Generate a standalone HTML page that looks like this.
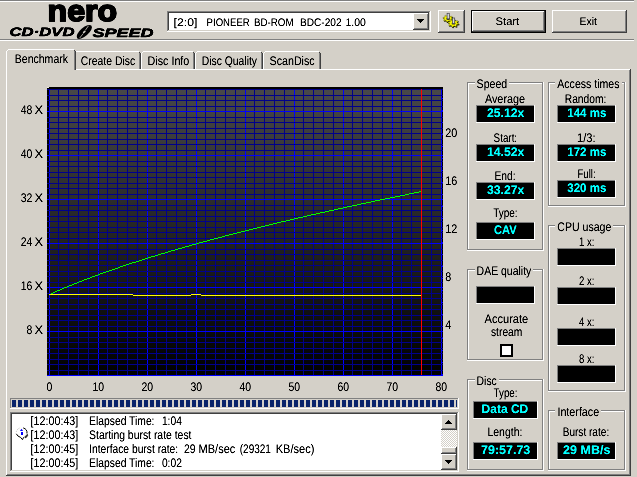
<!DOCTYPE html>
<html><head><meta charset="utf-8"><title>Nero CD-DVD Speed</title>
<style>
html,body{margin:0;padding:0;background:#d4d0c8;overflow:hidden}
svg{display:block;font-family:"Liberation Sans",sans-serif}
svg rect,svg polygon{shape-rendering:crispEdges}
svg text{text-rendering:geometricPrecision}
</style></head><body>
<svg width="637" height="477" viewBox="0 0 637 477">
<rect x="0" y="0" width="637" height="477" fill="#d4d0c8"/>
<rect x="0" y="0" width="634" height="1" fill="#808080"/>
<rect x="0" y="1" width="634" height="1" fill="#ffffff"/>
<rect x="0" y="39" width="634" height="1" fill="#808080"/>
<rect x="0" y="40" width="634" height="1" fill="#ffffff"/>
<g transform="translate(84.3,31.9) rotate(-41)"><ellipse cx="0" cy="0" rx="9.5" ry="4.1" fill="#000"/><path d="M-7.5,1.6 L-1.8,0.5 M2,-0.6 L7,-1.8" stroke="#a8a49c" stroke-width="0.9" fill="none"/><ellipse cx="0" cy="0" rx="1.7" ry="0.9" fill="#d4d0c8"/></g>
<rect x="167" y="11" width="264" height="21" fill="#ffffff"/>
<rect x="167" y="11" width="264" height="1" fill="#808080"/>
<rect x="167" y="11" width="1" height="21" fill="#808080"/>
<rect x="168" y="12" width="262" height="1" fill="#404040"/>
<rect x="168" y="12" width="1" height="19" fill="#404040"/>
<rect x="167" y="31" width="264" height="1" fill="#ffffff"/>
<rect x="430" y="11" width="1" height="21" fill="#ffffff"/>
<rect x="168" y="30" width="262" height="1" fill="#d4d0c8"/>
<rect x="429" y="12" width="1" height="19" fill="#d4d0c8"/>
<rect x="413" y="13" width="16" height="17" fill="#d4d0c8"/>
<rect x="413" y="13" width="16" height="1" fill="#ffffff"/>
<rect x="413" y="13" width="1" height="17" fill="#ffffff"/>
<rect x="414" y="28" width="15" height="1" fill="#808080"/>
<rect x="427" y="14" width="1" height="16" fill="#808080"/>
<rect x="413" y="29" width="16" height="1" fill="#404040"/>
<rect x="428" y="13" width="1" height="17" fill="#404040"/>
<polygon points="417,19 424,19 420.5,23" fill="#000"/>
<rect x="438" y="10" width="27" height="23" fill="#d4d0c8"/>
<rect x="438" y="10" width="27" height="1" fill="#ffffff"/>
<rect x="438" y="10" width="1" height="23" fill="#ffffff"/>
<rect x="439" y="31" width="26" height="1" fill="#808080"/>
<rect x="463" y="11" width="1" height="22" fill="#808080"/>
<rect x="438" y="32" width="27" height="1" fill="#404040"/>
<rect x="464" y="10" width="1" height="23" fill="#404040"/>
<polygon points="453.77,19.67 453.57,20.40 451.87,20.59 451.45,21.04 451.86,22.24 451.00,22.65 449.61,21.92 448.87,22.02 447.98,23.08 446.96,22.94 446.70,21.71 446.08,21.41 444.40,21.71 443.83,21.09 444.85,20.09 444.70,19.57 443.23,18.93 443.43,18.20 445.13,18.01 445.55,17.56 445.14,16.36 446.00,15.95 447.39,16.68 448.13,16.58 449.02,15.52 450.04,15.66 450.30,16.89 450.92,17.19 452.60,16.89 453.17,17.51 452.15,18.51 452.30,19.03" fill="#181800" style="shape-rendering:auto"/>
<polygon points="452.88,18.84 452.68,19.52 451.07,19.69 450.68,20.10 451.07,21.21 450.26,21.59 448.95,20.91 448.25,21.01 447.41,21.98 446.45,21.85 446.20,20.72 445.62,20.45 444.03,20.72 443.49,20.15 444.46,19.23 444.32,18.75 442.92,18.16 443.12,17.48 444.73,17.31 445.12,16.90 444.73,15.79 445.54,15.41 446.85,16.09 447.55,15.99 448.39,15.02 449.35,15.15 449.60,16.28 450.18,16.55 451.77,16.28 452.31,16.85 451.34,17.77 451.48,18.25" fill="#f6f600" stroke="#404000" stroke-width="0.4" style="shape-rendering:auto"/>
<ellipse cx="448.2" cy="18.7" rx="1.8" ry="1.2" fill="#303020"/>
<rect x="447.09999999999997" y="13.3" width="2.2" height="5.6" fill="#d8d8e0" stroke="#404048" stroke-width="0.7" style="shape-rendering:auto"/>
<polygon points="459.57,24.42 459.35,25.25 457.52,25.46 457.07,25.96 457.52,27.32 456.59,27.79 455.09,26.96 454.30,27.08 453.34,28.28 452.25,28.11 451.97,26.73 451.30,26.39 449.49,26.73 448.87,26.03 449.97,24.90 449.82,24.30 448.23,23.58 448.45,22.75 450.28,22.54 450.73,22.04 450.28,20.68 451.21,20.21 452.71,21.04 453.50,20.92 454.46,19.72 455.55,19.89 455.83,21.27 456.50,21.61 458.31,21.27 458.93,21.97 457.83,23.10 457.98,23.70" fill="#181800" style="shape-rendering:auto"/>
<polygon points="458.67,23.59 458.47,24.36 456.73,24.56 456.31,25.03 456.73,26.29 455.85,26.73 454.43,25.96 453.68,26.07 452.77,27.18 451.73,27.03 451.47,25.74 450.83,25.43 449.13,25.74 448.54,25.09 449.58,24.04 449.43,23.48 447.93,22.81 448.13,22.04 449.87,21.84 450.29,21.37 449.87,20.11 450.75,19.67 452.17,20.44 452.92,20.33 453.83,19.22 454.87,19.37 455.13,20.66 455.77,20.97 457.47,20.66 458.06,21.31 457.02,22.36 457.17,22.92" fill="#f6f600" stroke="#404000" stroke-width="0.4" style="shape-rendering:auto"/>
<ellipse cx="453.6" cy="23.4" rx="1.8" ry="1.2" fill="#303020"/>
<rect x="452.5" y="18.0" width="2.2" height="5.6" fill="#d8d8e0" stroke="#404048" stroke-width="0.7" style="shape-rendering:auto"/>
<rect x="471" y="10" width="75" height="23" fill="#000"/>
<rect x="472" y="11" width="73" height="21" fill="#d4d0c8"/>
<rect x="472" y="11" width="73" height="1" fill="#ffffff"/>
<rect x="472" y="11" width="1" height="21" fill="#ffffff"/>
<rect x="473" y="30" width="72" height="1" fill="#808080"/>
<rect x="543" y="12" width="1" height="20" fill="#808080"/>
<rect x="472" y="31" width="73" height="1" fill="#404040"/>
<rect x="544" y="11" width="1" height="21" fill="#404040"/>
<rect x="552" y="10" width="75" height="23" fill="#d4d0c8"/>
<rect x="552" y="10" width="75" height="1" fill="#ffffff"/>
<rect x="552" y="10" width="1" height="23" fill="#ffffff"/>
<rect x="553" y="31" width="74" height="1" fill="#808080"/>
<rect x="625" y="11" width="1" height="22" fill="#808080"/>
<rect x="552" y="32" width="75" height="1" fill="#404040"/>
<rect x="626" y="10" width="1" height="23" fill="#404040"/>
<rect x="6" y="69" width="624" height="1" fill="#ffffff"/>
<rect x="6" y="69" width="1" height="406" fill="#ffffff"/>
<rect x="7" y="474" width="623" height="1" fill="#808080"/>
<rect x="629" y="70" width="1" height="405" fill="#808080"/>
<rect x="6" y="475" width="625" height="1" fill="#404040"/>
<rect x="630" y="69" width="1" height="407" fill="#404040"/>
<rect x="74" y="53" width="1" height="16" fill="#ffffff"/>
<rect x="76" y="51" width="63" height="1" fill="#ffffff"/>
<rect x="75" y="52" width="1" height="1" fill="#ffffff"/>
<rect x="139" y="53" width="1" height="16" fill="#808080"/>
<rect x="140" y="53" width="1" height="16" fill="#404040"/>
<rect x="139" y="52" width="1" height="1" fill="#404040"/>
<rect x="141" y="53" width="1" height="16" fill="#ffffff"/>
<rect x="143" y="51" width="50" height="1" fill="#ffffff"/>
<rect x="142" y="52" width="1" height="1" fill="#ffffff"/>
<rect x="193" y="53" width="1" height="16" fill="#808080"/>
<rect x="194" y="53" width="1" height="16" fill="#404040"/>
<rect x="193" y="52" width="1" height="1" fill="#404040"/>
<rect x="195" y="53" width="1" height="16" fill="#ffffff"/>
<rect x="197" y="51" width="64" height="1" fill="#ffffff"/>
<rect x="196" y="52" width="1" height="1" fill="#ffffff"/>
<rect x="261" y="53" width="1" height="16" fill="#808080"/>
<rect x="262" y="53" width="1" height="16" fill="#404040"/>
<rect x="261" y="52" width="1" height="1" fill="#404040"/>
<rect x="263" y="53" width="1" height="16" fill="#ffffff"/>
<rect x="265" y="51" width="54" height="1" fill="#ffffff"/>
<rect x="264" y="52" width="1" height="1" fill="#ffffff"/>
<rect x="319" y="53" width="1" height="16" fill="#808080"/>
<rect x="320" y="53" width="1" height="16" fill="#404040"/>
<rect x="319" y="52" width="1" height="1" fill="#404040"/>
<rect x="6" y="49" width="70" height="21" fill="#d4d0c8"/>
<rect x="6" y="51" width="1" height="19" fill="#ffffff"/>
<rect x="8" y="49" width="66" height="1" fill="#ffffff"/>
<rect x="7" y="50" width="1" height="1" fill="#ffffff"/>
<rect x="74" y="51" width="1" height="19" fill="#808080"/>
<rect x="75" y="51" width="1" height="19" fill="#404040"/>
<rect x="74" y="50" width="1" height="1" fill="#404040"/>
<defs><linearGradient id="gg" x1="0" y1="0" x2="0" y2="1"><stop offset="0" stop-color="#484848"/><stop offset="1" stop-color="#000000"/></linearGradient></defs>
<rect x="47" y="87" width="396" height="289" fill="#000"/>
<rect x="47" y="87" width="2" height="1" fill="#e8e6e0"/>
<rect x="49" y="89" width="393" height="287" fill="url(#gg)"/>
<rect x="49" y="89" width="1" height="287" fill="#0000ff"/>
<rect x="58" y="89" width="1" height="287" fill="#00008c"/>
<rect x="68" y="89" width="1" height="287" fill="#00008c"/>
<rect x="78" y="89" width="1" height="287" fill="#00008c"/>
<rect x="88" y="89" width="1" height="287" fill="#00008c"/>
<rect x="98" y="89" width="1" height="287" fill="#0000ff"/>
<rect x="107" y="89" width="1" height="287" fill="#00008c"/>
<rect x="117" y="89" width="1" height="287" fill="#00008c"/>
<rect x="127" y="89" width="1" height="287" fill="#00008c"/>
<rect x="137" y="89" width="1" height="287" fill="#00008c"/>
<rect x="147" y="89" width="1" height="287" fill="#0000ff"/>
<rect x="156" y="89" width="1" height="287" fill="#00008c"/>
<rect x="166" y="89" width="1" height="287" fill="#00008c"/>
<rect x="176" y="89" width="1" height="287" fill="#00008c"/>
<rect x="186" y="89" width="1" height="287" fill="#00008c"/>
<rect x="196" y="89" width="1" height="287" fill="#0000ff"/>
<rect x="205" y="89" width="1" height="287" fill="#00008c"/>
<rect x="215" y="89" width="1" height="287" fill="#00008c"/>
<rect x="225" y="89" width="1" height="287" fill="#00008c"/>
<rect x="235" y="89" width="1" height="287" fill="#00008c"/>
<rect x="245" y="89" width="1" height="287" fill="#0000ff"/>
<rect x="254" y="89" width="1" height="287" fill="#00008c"/>
<rect x="264" y="89" width="1" height="287" fill="#00008c"/>
<rect x="274" y="89" width="1" height="287" fill="#00008c"/>
<rect x="284" y="89" width="1" height="287" fill="#00008c"/>
<rect x="294" y="89" width="1" height="287" fill="#0000ff"/>
<rect x="303" y="89" width="1" height="287" fill="#00008c"/>
<rect x="313" y="89" width="1" height="287" fill="#00008c"/>
<rect x="323" y="89" width="1" height="287" fill="#00008c"/>
<rect x="333" y="89" width="1" height="287" fill="#00008c"/>
<rect x="343" y="89" width="1" height="287" fill="#0000ff"/>
<rect x="352" y="89" width="1" height="287" fill="#00008c"/>
<rect x="362" y="89" width="1" height="287" fill="#00008c"/>
<rect x="372" y="89" width="1" height="287" fill="#00008c"/>
<rect x="382" y="89" width="1" height="287" fill="#00008c"/>
<rect x="392" y="89" width="1" height="287" fill="#0000ff"/>
<rect x="401" y="89" width="1" height="287" fill="#00008c"/>
<rect x="411" y="89" width="1" height="287" fill="#00008c"/>
<rect x="421" y="89" width="1" height="287" fill="#00008c"/>
<rect x="431" y="89" width="1" height="287" fill="#00008c"/>
<rect x="441" y="89" width="1" height="287" fill="#0000ff"/>
<rect x="47" y="89" width="396" height="1" fill="#00008c"/>
<rect x="47" y="95" width="396" height="1" fill="#00008c"/>
<rect x="47" y="100" width="396" height="1" fill="#00008c"/>
<rect x="47" y="106" width="396" height="1" fill="#00008c"/>
<rect x="47" y="111" width="396" height="1" fill="#0000ff"/>
<rect x="47" y="117" width="396" height="1" fill="#00008c"/>
<rect x="47" y="122" width="396" height="1" fill="#00008c"/>
<rect x="47" y="128" width="396" height="1" fill="#00008c"/>
<rect x="47" y="133" width="396" height="1" fill="#00008c"/>
<rect x="47" y="139" width="396" height="1" fill="#00008c"/>
<rect x="47" y="144" width="396" height="1" fill="#00008c"/>
<rect x="47" y="150" width="396" height="1" fill="#00008c"/>
<rect x="47" y="155" width="396" height="1" fill="#0000ff"/>
<rect x="47" y="161" width="396" height="1" fill="#00008c"/>
<rect x="47" y="166" width="396" height="1" fill="#00008c"/>
<rect x="47" y="172" width="396" height="1" fill="#00008c"/>
<rect x="47" y="177" width="396" height="1" fill="#00008c"/>
<rect x="47" y="183" width="396" height="1" fill="#00008c"/>
<rect x="47" y="188" width="396" height="1" fill="#00008c"/>
<rect x="47" y="194" width="396" height="1" fill="#00008c"/>
<rect x="47" y="199" width="396" height="1" fill="#0000ff"/>
<rect x="47" y="205" width="396" height="1" fill="#00008c"/>
<rect x="47" y="210" width="396" height="1" fill="#00008c"/>
<rect x="47" y="216" width="396" height="1" fill="#00008c"/>
<rect x="47" y="221" width="396" height="1" fill="#00008c"/>
<rect x="47" y="227" width="396" height="1" fill="#00008c"/>
<rect x="47" y="232" width="396" height="1" fill="#00008c"/>
<rect x="47" y="238" width="396" height="1" fill="#00008c"/>
<rect x="47" y="243" width="396" height="1" fill="#0000ff"/>
<rect x="47" y="249" width="396" height="1" fill="#00008c"/>
<rect x="47" y="254" width="396" height="1" fill="#00008c"/>
<rect x="47" y="260" width="396" height="1" fill="#00008c"/>
<rect x="47" y="265" width="396" height="1" fill="#00008c"/>
<rect x="47" y="271" width="396" height="1" fill="#00008c"/>
<rect x="47" y="276" width="396" height="1" fill="#00008c"/>
<rect x="47" y="282" width="396" height="1" fill="#00008c"/>
<rect x="47" y="287" width="396" height="1" fill="#0000ff"/>
<rect x="47" y="293" width="396" height="1" fill="#00008c"/>
<rect x="47" y="298" width="396" height="1" fill="#00008c"/>
<rect x="47" y="304" width="396" height="1" fill="#00008c"/>
<rect x="47" y="309" width="396" height="1" fill="#00008c"/>
<rect x="47" y="315" width="396" height="1" fill="#00008c"/>
<rect x="47" y="320" width="396" height="1" fill="#00008c"/>
<rect x="47" y="326" width="396" height="1" fill="#00008c"/>
<rect x="47" y="331" width="396" height="1" fill="#0000ff"/>
<rect x="47" y="337" width="396" height="1" fill="#00008c"/>
<rect x="47" y="342" width="396" height="1" fill="#00008c"/>
<rect x="47" y="348" width="396" height="1" fill="#00008c"/>
<rect x="47" y="353" width="396" height="1" fill="#00008c"/>
<rect x="47" y="359" width="396" height="1" fill="#00008c"/>
<rect x="47" y="364" width="396" height="1" fill="#00008c"/>
<rect x="47" y="370" width="396" height="1" fill="#00008c"/>
<rect x="47" y="375" width="396" height="1" fill="#0000ff"/>
<rect x="442" y="374" width="1" height="1" fill="#0000ff"/>
<rect x="442" y="362" width="1" height="1" fill="#0000ff"/>
<rect x="442" y="350" width="1" height="1" fill="#0000ff"/>
<rect x="442" y="338" width="1" height="1" fill="#0000ff"/>
<rect x="442" y="326" width="1" height="1" fill="#0000ff"/>
<rect x="442" y="314" width="1" height="1" fill="#0000ff"/>
<rect x="442" y="302" width="1" height="1" fill="#0000ff"/>
<rect x="442" y="290" width="1" height="1" fill="#0000ff"/>
<rect x="442" y="278" width="1" height="1" fill="#0000ff"/>
<rect x="442" y="266" width="1" height="1" fill="#0000ff"/>
<rect x="442" y="254" width="1" height="1" fill="#0000ff"/>
<rect x="442" y="242" width="1" height="1" fill="#0000ff"/>
<rect x="442" y="230" width="1" height="1" fill="#0000ff"/>
<rect x="442" y="218" width="1" height="1" fill="#0000ff"/>
<rect x="442" y="206" width="1" height="1" fill="#0000ff"/>
<rect x="442" y="194" width="1" height="1" fill="#0000ff"/>
<rect x="442" y="182" width="1" height="1" fill="#0000ff"/>
<rect x="442" y="170" width="1" height="1" fill="#0000ff"/>
<rect x="442" y="158" width="1" height="1" fill="#0000ff"/>
<rect x="442" y="146" width="1" height="1" fill="#0000ff"/>
<rect x="442" y="134" width="1" height="1" fill="#0000ff"/>
<rect x="442" y="122" width="1" height="1" fill="#0000ff"/>
<rect x="442" y="110" width="1" height="1" fill="#0000ff"/>
<rect x="442" y="98" width="1" height="1" fill="#0000ff"/>
<rect x="49" y="294" width="2" height="1" fill="#00ff00"/>
<rect x="51" y="293" width="2" height="1" fill="#00ff00"/>
<rect x="53" y="292" width="2" height="1" fill="#00ff00"/>
<rect x="55" y="291" width="2" height="1" fill="#00ff00"/>
<rect x="57" y="290" width="3" height="1" fill="#00ff00"/>
<rect x="60" y="289" width="2" height="1" fill="#00ff00"/>
<rect x="62" y="288" width="2" height="1" fill="#00ff00"/>
<rect x="64" y="287" width="3" height="1" fill="#00ff00"/>
<rect x="67" y="286" width="2" height="1" fill="#00ff00"/>
<rect x="69" y="285" width="3" height="1" fill="#00ff00"/>
<rect x="72" y="284" width="2" height="1" fill="#00ff00"/>
<rect x="74" y="283" width="3" height="1" fill="#00ff00"/>
<rect x="77" y="282" width="2" height="1" fill="#00ff00"/>
<rect x="79" y="281" width="3" height="1" fill="#00ff00"/>
<rect x="82" y="280" width="2" height="1" fill="#00ff00"/>
<rect x="84" y="279" width="3" height="1" fill="#00ff00"/>
<rect x="87" y="278" width="3" height="1" fill="#00ff00"/>
<rect x="90" y="277" width="2" height="1" fill="#00ff00"/>
<rect x="92" y="276" width="3" height="1" fill="#00ff00"/>
<rect x="95" y="275" width="3" height="1" fill="#00ff00"/>
<rect x="98" y="274" width="2" height="1" fill="#00ff00"/>
<rect x="100" y="273" width="3" height="1" fill="#00ff00"/>
<rect x="103" y="272" width="3" height="1" fill="#00ff00"/>
<rect x="106" y="271" width="3" height="1" fill="#00ff00"/>
<rect x="109" y="270" width="3" height="1" fill="#00ff00"/>
<rect x="112" y="269" width="3" height="1" fill="#00ff00"/>
<rect x="115" y="268" width="3" height="1" fill="#00ff00"/>
<rect x="118" y="267" width="2" height="1" fill="#00ff00"/>
<rect x="120" y="266" width="3" height="1" fill="#00ff00"/>
<rect x="123" y="265" width="3" height="1" fill="#00ff00"/>
<rect x="126" y="264" width="3" height="1" fill="#00ff00"/>
<rect x="129" y="263" width="3" height="1" fill="#00ff00"/>
<rect x="132" y="262" width="4" height="1" fill="#00ff00"/>
<rect x="136" y="261" width="3" height="1" fill="#00ff00"/>
<rect x="139" y="260" width="3" height="1" fill="#00ff00"/>
<rect x="142" y="259" width="3" height="1" fill="#00ff00"/>
<rect x="145" y="258" width="3" height="1" fill="#00ff00"/>
<rect x="148" y="257" width="3" height="1" fill="#00ff00"/>
<rect x="151" y="256" width="4" height="1" fill="#00ff00"/>
<rect x="155" y="255" width="3" height="1" fill="#00ff00"/>
<rect x="158" y="254" width="3" height="1" fill="#00ff00"/>
<rect x="161" y="253" width="4" height="1" fill="#00ff00"/>
<rect x="165" y="252" width="3" height="1" fill="#00ff00"/>
<rect x="168" y="251" width="3" height="1" fill="#00ff00"/>
<rect x="171" y="250" width="4" height="1" fill="#00ff00"/>
<rect x="175" y="249" width="3" height="1" fill="#00ff00"/>
<rect x="178" y="248" width="4" height="1" fill="#00ff00"/>
<rect x="182" y="247" width="3" height="1" fill="#00ff00"/>
<rect x="185" y="246" width="4" height="1" fill="#00ff00"/>
<rect x="189" y="245" width="3" height="1" fill="#00ff00"/>
<rect x="192" y="244" width="4" height="1" fill="#00ff00"/>
<rect x="196" y="243" width="3" height="1" fill="#00ff00"/>
<rect x="199" y="242" width="4" height="1" fill="#00ff00"/>
<rect x="203" y="241" width="4" height="1" fill="#00ff00"/>
<rect x="207" y="240" width="3" height="1" fill="#00ff00"/>
<rect x="210" y="239" width="4" height="1" fill="#00ff00"/>
<rect x="214" y="238" width="4" height="1" fill="#00ff00"/>
<rect x="218" y="237" width="4" height="1" fill="#00ff00"/>
<rect x="222" y="236" width="3" height="1" fill="#00ff00"/>
<rect x="225" y="235" width="4" height="1" fill="#00ff00"/>
<rect x="229" y="234" width="4" height="1" fill="#00ff00"/>
<rect x="233" y="233" width="4" height="1" fill="#00ff00"/>
<rect x="237" y="232" width="4" height="1" fill="#00ff00"/>
<rect x="241" y="231" width="4" height="1" fill="#00ff00"/>
<rect x="245" y="230" width="4" height="1" fill="#00ff00"/>
<rect x="249" y="229" width="4" height="1" fill="#00ff00"/>
<rect x="253" y="228" width="4" height="1" fill="#00ff00"/>
<rect x="257" y="227" width="4" height="1" fill="#00ff00"/>
<rect x="261" y="226" width="4" height="1" fill="#00ff00"/>
<rect x="265" y="225" width="4" height="1" fill="#00ff00"/>
<rect x="269" y="224" width="4" height="1" fill="#00ff00"/>
<rect x="273" y="223" width="4" height="1" fill="#00ff00"/>
<rect x="277" y="222" width="4" height="1" fill="#00ff00"/>
<rect x="281" y="221" width="5" height="1" fill="#00ff00"/>
<rect x="286" y="220" width="4" height="1" fill="#00ff00"/>
<rect x="290" y="219" width="4" height="1" fill="#00ff00"/>
<rect x="294" y="218" width="4" height="1" fill="#00ff00"/>
<rect x="298" y="217" width="5" height="1" fill="#00ff00"/>
<rect x="303" y="216" width="4" height="1" fill="#00ff00"/>
<rect x="307" y="215" width="4" height="1" fill="#00ff00"/>
<rect x="311" y="214" width="5" height="1" fill="#00ff00"/>
<rect x="316" y="213" width="4" height="1" fill="#00ff00"/>
<rect x="320" y="212" width="5" height="1" fill="#00ff00"/>
<rect x="325" y="211" width="4" height="1" fill="#00ff00"/>
<rect x="329" y="210" width="5" height="1" fill="#00ff00"/>
<rect x="334" y="209" width="4" height="1" fill="#00ff00"/>
<rect x="338" y="208" width="5" height="1" fill="#00ff00"/>
<rect x="343" y="207" width="4" height="1" fill="#00ff00"/>
<rect x="347" y="206" width="5" height="1" fill="#00ff00"/>
<rect x="352" y="205" width="5" height="1" fill="#00ff00"/>
<rect x="357" y="204" width="4" height="1" fill="#00ff00"/>
<rect x="361" y="203" width="5" height="1" fill="#00ff00"/>
<rect x="366" y="202" width="5" height="1" fill="#00ff00"/>
<rect x="371" y="201" width="4" height="1" fill="#00ff00"/>
<rect x="375" y="200" width="5" height="1" fill="#00ff00"/>
<rect x="380" y="199" width="5" height="1" fill="#00ff00"/>
<rect x="385" y="198" width="5" height="1" fill="#00ff00"/>
<rect x="390" y="197" width="5" height="1" fill="#00ff00"/>
<rect x="395" y="196" width="5" height="1" fill="#00ff00"/>
<rect x="400" y="195" width="5" height="1" fill="#00ff00"/>
<rect x="405" y="194" width="4" height="1" fill="#00ff00"/>
<rect x="409" y="193" width="5" height="1" fill="#00ff00"/>
<rect x="414" y="192" width="5" height="1" fill="#00ff00"/>
<rect x="419" y="191" width="3" height="1" fill="#00ff00"/>
<rect x="49" y="294" width="84" height="1" fill="#ffff00"/>
<rect x="133" y="295" width="58" height="1" fill="#ffff00"/>
<rect x="191" y="294" width="10" height="1" fill="#ffff00"/>
<rect x="201" y="295" width="220" height="1" fill="#ffff00"/>
<rect x="421" y="89" width="1" height="286" fill="#ff0000"/>
<rect x="10" y="398" width="448" height="1" fill="#808080"/>
<rect x="10" y="398" width="1" height="11" fill="#808080"/>
<rect x="10" y="408" width="449" height="1" fill="#ffffff"/>
<rect x="458" y="398" width="1" height="11" fill="#ffffff"/>
<rect x="12" y="400" width="4" height="7" fill="#0a246a"/>
<rect x="18" y="400" width="4" height="7" fill="#0a246a"/>
<rect x="24" y="400" width="4" height="7" fill="#0a246a"/>
<rect x="30" y="400" width="4" height="7" fill="#0a246a"/>
<rect x="36" y="400" width="4" height="7" fill="#0a246a"/>
<rect x="42" y="400" width="4" height="7" fill="#0a246a"/>
<rect x="48" y="400" width="4" height="7" fill="#0a246a"/>
<rect x="54" y="400" width="4" height="7" fill="#0a246a"/>
<rect x="60" y="400" width="4" height="7" fill="#0a246a"/>
<rect x="66" y="400" width="4" height="7" fill="#0a246a"/>
<rect x="72" y="400" width="4" height="7" fill="#0a246a"/>
<rect x="78" y="400" width="4" height="7" fill="#0a246a"/>
<rect x="84" y="400" width="4" height="7" fill="#0a246a"/>
<rect x="90" y="400" width="4" height="7" fill="#0a246a"/>
<rect x="96" y="400" width="4" height="7" fill="#0a246a"/>
<rect x="102" y="400" width="4" height="7" fill="#0a246a"/>
<rect x="108" y="400" width="4" height="7" fill="#0a246a"/>
<rect x="114" y="400" width="4" height="7" fill="#0a246a"/>
<rect x="120" y="400" width="4" height="7" fill="#0a246a"/>
<rect x="126" y="400" width="4" height="7" fill="#0a246a"/>
<rect x="132" y="400" width="4" height="7" fill="#0a246a"/>
<rect x="138" y="400" width="4" height="7" fill="#0a246a"/>
<rect x="144" y="400" width="4" height="7" fill="#0a246a"/>
<rect x="150" y="400" width="4" height="7" fill="#0a246a"/>
<rect x="156" y="400" width="4" height="7" fill="#0a246a"/>
<rect x="162" y="400" width="4" height="7" fill="#0a246a"/>
<rect x="168" y="400" width="4" height="7" fill="#0a246a"/>
<rect x="174" y="400" width="4" height="7" fill="#0a246a"/>
<rect x="180" y="400" width="4" height="7" fill="#0a246a"/>
<rect x="186" y="400" width="4" height="7" fill="#0a246a"/>
<rect x="192" y="400" width="4" height="7" fill="#0a246a"/>
<rect x="198" y="400" width="4" height="7" fill="#0a246a"/>
<rect x="204" y="400" width="4" height="7" fill="#0a246a"/>
<rect x="210" y="400" width="4" height="7" fill="#0a246a"/>
<rect x="216" y="400" width="4" height="7" fill="#0a246a"/>
<rect x="222" y="400" width="4" height="7" fill="#0a246a"/>
<rect x="228" y="400" width="4" height="7" fill="#0a246a"/>
<rect x="234" y="400" width="4" height="7" fill="#0a246a"/>
<rect x="240" y="400" width="4" height="7" fill="#0a246a"/>
<rect x="246" y="400" width="4" height="7" fill="#0a246a"/>
<rect x="252" y="400" width="4" height="7" fill="#0a246a"/>
<rect x="258" y="400" width="4" height="7" fill="#0a246a"/>
<rect x="264" y="400" width="4" height="7" fill="#0a246a"/>
<rect x="270" y="400" width="4" height="7" fill="#0a246a"/>
<rect x="276" y="400" width="4" height="7" fill="#0a246a"/>
<rect x="282" y="400" width="4" height="7" fill="#0a246a"/>
<rect x="288" y="400" width="4" height="7" fill="#0a246a"/>
<rect x="294" y="400" width="4" height="7" fill="#0a246a"/>
<rect x="300" y="400" width="4" height="7" fill="#0a246a"/>
<rect x="306" y="400" width="4" height="7" fill="#0a246a"/>
<rect x="312" y="400" width="4" height="7" fill="#0a246a"/>
<rect x="318" y="400" width="4" height="7" fill="#0a246a"/>
<rect x="324" y="400" width="4" height="7" fill="#0a246a"/>
<rect x="330" y="400" width="4" height="7" fill="#0a246a"/>
<rect x="336" y="400" width="4" height="7" fill="#0a246a"/>
<rect x="342" y="400" width="4" height="7" fill="#0a246a"/>
<rect x="348" y="400" width="4" height="7" fill="#0a246a"/>
<rect x="354" y="400" width="4" height="7" fill="#0a246a"/>
<rect x="360" y="400" width="4" height="7" fill="#0a246a"/>
<rect x="366" y="400" width="4" height="7" fill="#0a246a"/>
<rect x="372" y="400" width="4" height="7" fill="#0a246a"/>
<rect x="378" y="400" width="4" height="7" fill="#0a246a"/>
<rect x="384" y="400" width="4" height="7" fill="#0a246a"/>
<rect x="390" y="400" width="4" height="7" fill="#0a246a"/>
<rect x="396" y="400" width="4" height="7" fill="#0a246a"/>
<rect x="402" y="400" width="4" height="7" fill="#0a246a"/>
<rect x="408" y="400" width="4" height="7" fill="#0a246a"/>
<rect x="414" y="400" width="4" height="7" fill="#0a246a"/>
<rect x="420" y="400" width="4" height="7" fill="#0a246a"/>
<rect x="426" y="400" width="4" height="7" fill="#0a246a"/>
<rect x="432" y="400" width="4" height="7" fill="#0a246a"/>
<rect x="438" y="400" width="4" height="7" fill="#0a246a"/>
<rect x="444" y="400" width="4" height="7" fill="#0a246a"/>
<rect x="450" y="400" width="4" height="7" fill="#0a246a"/>
<rect x="456" y="400" width="1" height="7" fill="#0a246a"/>
<rect x="10" y="412" width="449" height="60" fill="#ffffff"/>
<rect x="10" y="412" width="448" height="1" fill="#808080"/>
<rect x="10" y="412" width="1" height="59" fill="#808080"/>
<rect x="11" y="413" width="446" height="1" fill="#404040"/>
<rect x="11" y="413" width="1" height="57" fill="#404040"/>
<rect x="10" y="471" width="449" height="1" fill="#ffffff"/>
<rect x="458" y="412" width="1" height="60" fill="#ffffff"/>
<rect x="11" y="470" width="447" height="1" fill="#d4d0c8"/>
<rect x="457" y="413" width="1" height="58" fill="#d4d0c8"/>
<rect x="441" y="414" width="16" height="56" fill="#eae8e3"/>
<defs><pattern id="chk" width="2" height="2" patternUnits="userSpaceOnUse"><rect width="2" height="2" fill="#fff"/><rect width="1" height="1" fill="#d4d0c8"/><rect x="1" y="1" width="1" height="1" fill="#d4d0c8"/></pattern></defs>
<rect x="441" y="414" width="16" height="56" fill="url(#chk)"/>
<rect x="441" y="414" width="16" height="16" fill="#d4d0c8"/>
<rect x="441" y="414" width="16" height="1" fill="#ffffff"/>
<rect x="441" y="414" width="1" height="16" fill="#ffffff"/>
<rect x="442" y="428" width="15" height="1" fill="#808080"/>
<rect x="455" y="415" width="1" height="15" fill="#808080"/>
<rect x="441" y="429" width="16" height="1" fill="#404040"/>
<rect x="456" y="414" width="1" height="16" fill="#404040"/>
<rect x="441" y="454" width="16" height="16" fill="#d4d0c8"/>
<rect x="441" y="454" width="16" height="1" fill="#ffffff"/>
<rect x="441" y="454" width="1" height="16" fill="#ffffff"/>
<rect x="442" y="468" width="15" height="1" fill="#808080"/>
<rect x="455" y="455" width="1" height="15" fill="#808080"/>
<rect x="441" y="469" width="16" height="1" fill="#404040"/>
<rect x="456" y="454" width="1" height="16" fill="#404040"/>
<rect x="441" y="447" width="16" height="7" fill="#d4d0c8"/>
<rect x="441" y="447" width="16" height="1" fill="#ffffff"/>
<rect x="441" y="447" width="1" height="7" fill="#ffffff"/>
<rect x="442" y="452" width="15" height="1" fill="#808080"/>
<rect x="455" y="448" width="1" height="6" fill="#808080"/>
<rect x="441" y="453" width="16" height="1" fill="#404040"/>
<rect x="456" y="447" width="1" height="7" fill="#404040"/>
<polygon points="445,424 452,424 448.5,420" fill="#000"/>
<polygon points="445,460 452,460 448.5,464" fill="#000"/>
<g style="shape-rendering:auto"><circle cx="21.7" cy="432.9" r="5.3" fill="#fff"/><path d="M23.2,427.9 A5.3,5.3 0 0 1 27,433.5" fill="none" stroke="#000" stroke-width="1"/><path d="M16.3,433.8 Q17.5,436.5 20.6,437.4 L22.5,439.7 L23.6,437.3" fill="#fff" stroke="#000" stroke-width="1" stroke-linejoin="round"/><path d="M24.6,437.2 L27.4,434.2 L27.6,435.8 L25.8,437.9 Z" fill="#303030" stroke="#000" stroke-width="0.6"/><path d="M16.4,431.6 A5.3,5.3 0 0 1 20.3,427.8" fill="none" stroke="#909090" stroke-width="0.8" stroke-dasharray="0.8 1.1"/><path d="M19.9,431 L21.5,428.8 L23.1,431 Z" fill="#0000ff"/><rect x="20.9" y="431.9" width="2.2" height="3.2" fill="#0000ff"/></g>
<rect x="467" y="82" width="76" height="1" fill="#808080"/>
<rect x="468" y="83" width="74" height="1" fill="#ffffff"/>
<rect x="467" y="82" width="1" height="168" fill="#808080"/>
<rect x="468" y="83" width="1" height="166" fill="#ffffff"/>
<rect x="467" y="249" width="76" height="1" fill="#808080"/>
<rect x="467" y="250" width="77" height="1" fill="#ffffff"/>
<rect x="542" y="82" width="1" height="168" fill="#808080"/>
<rect x="543" y="82" width="1" height="169" fill="#ffffff"/>
<rect x="474.6" y="82" width="34.599999999999966" height="2" fill="#d4d0c8"/>
<rect x="476" y="105" width="59" height="18" fill="#000"/>
<rect x="476" y="105" width="59" height="1" fill="#808080"/>
<rect x="476" y="105" width="1" height="18" fill="#808080"/>
<rect x="476" y="122" width="59" height="1" fill="#ffffff"/>
<rect x="534" y="105" width="1" height="18" fill="#ffffff"/>
<rect x="476" y="144" width="59" height="18" fill="#000"/>
<rect x="476" y="144" width="59" height="1" fill="#808080"/>
<rect x="476" y="144" width="1" height="18" fill="#808080"/>
<rect x="476" y="161" width="59" height="1" fill="#ffffff"/>
<rect x="534" y="144" width="1" height="18" fill="#ffffff"/>
<rect x="476" y="182" width="59" height="18" fill="#000"/>
<rect x="476" y="182" width="59" height="1" fill="#808080"/>
<rect x="476" y="182" width="1" height="18" fill="#808080"/>
<rect x="476" y="199" width="59" height="1" fill="#ffffff"/>
<rect x="534" y="182" width="1" height="18" fill="#ffffff"/>
<rect x="476" y="222" width="59" height="18" fill="#000"/>
<rect x="476" y="222" width="59" height="1" fill="#808080"/>
<rect x="476" y="222" width="1" height="18" fill="#808080"/>
<rect x="476" y="239" width="59" height="1" fill="#ffffff"/>
<rect x="534" y="222" width="1" height="18" fill="#ffffff"/>
<rect x="548" y="82" width="77" height="1" fill="#808080"/>
<rect x="549" y="83" width="75" height="1" fill="#ffffff"/>
<rect x="548" y="82" width="1" height="124" fill="#808080"/>
<rect x="549" y="83" width="1" height="122" fill="#ffffff"/>
<rect x="548" y="205" width="77" height="1" fill="#808080"/>
<rect x="548" y="206" width="78" height="1" fill="#ffffff"/>
<rect x="624" y="82" width="1" height="124" fill="#808080"/>
<rect x="625" y="82" width="1" height="125" fill="#ffffff"/>
<rect x="555.3" y="82" width="66.20000000000005" height="2" fill="#d4d0c8"/>
<rect x="557" y="105" width="59" height="18" fill="#000"/>
<rect x="557" y="105" width="59" height="1" fill="#808080"/>
<rect x="557" y="105" width="1" height="18" fill="#808080"/>
<rect x="557" y="122" width="59" height="1" fill="#ffffff"/>
<rect x="615" y="105" width="1" height="18" fill="#ffffff"/>
<rect x="557" y="144" width="59" height="18" fill="#000"/>
<rect x="557" y="144" width="59" height="1" fill="#808080"/>
<rect x="557" y="144" width="1" height="18" fill="#808080"/>
<rect x="557" y="161" width="59" height="1" fill="#ffffff"/>
<rect x="615" y="144" width="1" height="18" fill="#ffffff"/>
<rect x="557" y="180" width="59" height="18" fill="#000"/>
<rect x="557" y="180" width="59" height="1" fill="#808080"/>
<rect x="557" y="180" width="1" height="18" fill="#808080"/>
<rect x="557" y="197" width="59" height="1" fill="#ffffff"/>
<rect x="615" y="180" width="1" height="18" fill="#ffffff"/>
<rect x="548" y="225" width="77" height="1" fill="#808080"/>
<rect x="549" y="226" width="75" height="1" fill="#ffffff"/>
<rect x="548" y="225" width="1" height="166" fill="#808080"/>
<rect x="549" y="226" width="1" height="164" fill="#ffffff"/>
<rect x="548" y="390" width="77" height="1" fill="#808080"/>
<rect x="548" y="391" width="78" height="1" fill="#ffffff"/>
<rect x="624" y="225" width="1" height="166" fill="#808080"/>
<rect x="625" y="225" width="1" height="167" fill="#ffffff"/>
<rect x="555.3" y="225" width="58.10000000000002" height="2" fill="#d4d0c8"/>
<rect x="557" y="248" width="59" height="18" fill="#000"/>
<rect x="557" y="248" width="59" height="1" fill="#808080"/>
<rect x="557" y="248" width="1" height="18" fill="#808080"/>
<rect x="557" y="265" width="59" height="1" fill="#ffffff"/>
<rect x="615" y="248" width="1" height="18" fill="#ffffff"/>
<rect x="557" y="287" width="59" height="18" fill="#000"/>
<rect x="557" y="287" width="59" height="1" fill="#808080"/>
<rect x="557" y="287" width="1" height="18" fill="#808080"/>
<rect x="557" y="304" width="59" height="1" fill="#ffffff"/>
<rect x="615" y="287" width="1" height="18" fill="#ffffff"/>
<rect x="557" y="328" width="59" height="18" fill="#000"/>
<rect x="557" y="328" width="59" height="1" fill="#808080"/>
<rect x="557" y="328" width="1" height="18" fill="#808080"/>
<rect x="557" y="345" width="59" height="1" fill="#ffffff"/>
<rect x="615" y="328" width="1" height="18" fill="#ffffff"/>
<rect x="557" y="365" width="59" height="18" fill="#000"/>
<rect x="557" y="365" width="59" height="1" fill="#808080"/>
<rect x="557" y="365" width="1" height="18" fill="#808080"/>
<rect x="557" y="382" width="59" height="1" fill="#ffffff"/>
<rect x="615" y="365" width="1" height="18" fill="#ffffff"/>
<rect x="467" y="269" width="76" height="1" fill="#808080"/>
<rect x="468" y="270" width="74" height="1" fill="#ffffff"/>
<rect x="467" y="269" width="1" height="91" fill="#808080"/>
<rect x="468" y="270" width="1" height="89" fill="#ffffff"/>
<rect x="467" y="359" width="76" height="1" fill="#808080"/>
<rect x="467" y="360" width="77" height="1" fill="#ffffff"/>
<rect x="542" y="269" width="1" height="91" fill="#808080"/>
<rect x="543" y="269" width="1" height="92" fill="#ffffff"/>
<rect x="474.6" y="269" width="58.69999999999993" height="2" fill="#d4d0c8"/>
<rect x="476" y="286" width="59" height="18" fill="#000"/>
<rect x="476" y="286" width="59" height="1" fill="#808080"/>
<rect x="476" y="286" width="1" height="18" fill="#808080"/>
<rect x="476" y="303" width="59" height="1" fill="#ffffff"/>
<rect x="534" y="286" width="1" height="18" fill="#ffffff"/>
<rect x="500" y="344" width="13" height="13" fill="#000"/>
<rect x="502" y="346" width="9" height="9" fill="#ffffff"/>
<rect x="467" y="379" width="76" height="1" fill="#808080"/>
<rect x="468" y="380" width="74" height="1" fill="#ffffff"/>
<rect x="467" y="379" width="1" height="91" fill="#808080"/>
<rect x="468" y="380" width="1" height="89" fill="#ffffff"/>
<rect x="467" y="469" width="76" height="1" fill="#808080"/>
<rect x="467" y="470" width="77" height="1" fill="#ffffff"/>
<rect x="542" y="379" width="1" height="91" fill="#808080"/>
<rect x="543" y="379" width="1" height="92" fill="#ffffff"/>
<rect x="474.6" y="379" width="24.19999999999999" height="2" fill="#d4d0c8"/>
<rect x="473" y="401" width="65" height="18" fill="#000"/>
<rect x="473" y="401" width="65" height="1" fill="#808080"/>
<rect x="473" y="401" width="1" height="18" fill="#808080"/>
<rect x="473" y="418" width="65" height="1" fill="#ffffff"/>
<rect x="537" y="401" width="1" height="18" fill="#ffffff"/>
<rect x="473" y="442" width="65" height="18" fill="#000"/>
<rect x="473" y="442" width="65" height="1" fill="#808080"/>
<rect x="473" y="442" width="1" height="18" fill="#808080"/>
<rect x="473" y="459" width="65" height="1" fill="#ffffff"/>
<rect x="537" y="442" width="1" height="18" fill="#ffffff"/>
<rect x="548" y="410" width="77" height="1" fill="#808080"/>
<rect x="549" y="411" width="75" height="1" fill="#ffffff"/>
<rect x="548" y="410" width="1" height="60" fill="#808080"/>
<rect x="549" y="411" width="1" height="58" fill="#ffffff"/>
<rect x="548" y="469" width="77" height="1" fill="#808080"/>
<rect x="548" y="470" width="78" height="1" fill="#ffffff"/>
<rect x="624" y="410" width="1" height="60" fill="#808080"/>
<rect x="625" y="410" width="1" height="61" fill="#ffffff"/>
<rect x="555.4" y="410" width="45.80000000000007" height="2" fill="#d4d0c8"/>
<rect x="557" y="442" width="59" height="18" fill="#000"/>
<rect x="557" y="442" width="59" height="1" fill="#808080"/>
<rect x="557" y="442" width="1" height="18" fill="#808080"/>
<rect x="557" y="459" width="59" height="1" fill="#ffffff"/>
<rect x="615" y="442" width="1" height="18" fill="#ffffff"/>
<defs><filter id="thr" x="0" y="0" width="637" height="477" filterUnits="userSpaceOnUse" color-interpolation-filters="sRGB"><feComponentTransfer><feFuncA type="linear" slope="1.5" intercept="-0.12"/></feComponentTransfer></filter></defs>
<g filter="url(#thr)"><text x="47.6" y="20.6" font-size="29.7" font-weight="bold" fill="#000" stroke="#000" stroke-width="1.6" stroke-linejoin="miter" textLength="69.5" lengthAdjust="spacingAndGlyphs">nero</text>
<text x="9.5" y="36.4" font-size="12.2" font-weight="bold" font-style="italic" fill="#000" stroke="#000" stroke-width="0.45" textLength="65" lengthAdjust="spacingAndGlyphs">CD·DVD</text>
<text x="92.5" y="36.6" font-size="12.2" font-weight="bold" font-style="italic" fill="#000" stroke="#000" stroke-width="0.45" textLength="61" lengthAdjust="spacingAndGlyphs">SPEED</text>
<text x="173.6" y="26" font-size="11" font-weight="normal" fill="#000" textLength="23.8" lengthAdjust="spacingAndGlyphs">[2:0]</text>
<text x="206.6" y="26" font-size="11" font-weight="normal" fill="#000" textLength="43.1" lengthAdjust="spacingAndGlyphs">PIONEER</text>
<text x="254" y="26" font-size="11" font-weight="normal" fill="#000" textLength="39.6" lengthAdjust="spacingAndGlyphs">BD-ROM</text>
<text x="299.9" y="26" font-size="11" font-weight="normal" fill="#000" textLength="41.7" lengthAdjust="spacingAndGlyphs">BDC-202</text>
<text x="345.4" y="26" font-size="11" font-weight="normal" fill="#000" textLength="20.4" lengthAdjust="spacingAndGlyphs">1.00</text>
<text x="495.6" y="25" font-size="11" font-weight="normal" fill="#000" textLength="23.6" lengthAdjust="spacingAndGlyphs">Start</text>
<text x="579.6" y="25" font-size="11" font-weight="normal" fill="#000" textLength="17.4" lengthAdjust="spacingAndGlyphs">Exit</text>
<text x="80.8" y="65" font-size="12.5" font-weight="normal" fill="#000" textLength="54.4" lengthAdjust="spacingAndGlyphs">Create Disc</text>
<text x="147.6" y="65" font-size="12.5" font-weight="normal" fill="#000" textLength="41.7" lengthAdjust="spacingAndGlyphs">Disc Info</text>
<text x="201.8" y="65" font-size="12.5" font-weight="normal" fill="#000" textLength="55.2" lengthAdjust="spacingAndGlyphs">Disc Quality</text>
<text x="269.5" y="65" font-size="12.5" font-weight="normal" fill="#000" textLength="45.2" lengthAdjust="spacingAndGlyphs">ScanDisc</text>
<text x="14.8" y="63" font-size="12.5" font-weight="normal" fill="#000" textLength="53.2" lengthAdjust="spacingAndGlyphs">Benchmark</text>
<text x="20.699999999999996" y="114.0" font-size="12.5" font-weight="normal" fill="#000" textLength="11.6" lengthAdjust="spacingAndGlyphs">48</text>
<text x="34.4" y="114.0" font-size="12.5" font-weight="normal" fill="#000" textLength="8.6" lengthAdjust="spacingAndGlyphs">X</text>
<text x="20.699999999999996" y="158.0" font-size="12.5" font-weight="normal" fill="#000" textLength="11.6" lengthAdjust="spacingAndGlyphs">40</text>
<text x="34.4" y="158.0" font-size="12.5" font-weight="normal" fill="#000" textLength="8.6" lengthAdjust="spacingAndGlyphs">X</text>
<text x="20.699999999999996" y="202.0" font-size="12.5" font-weight="normal" fill="#000" textLength="11.6" lengthAdjust="spacingAndGlyphs">32</text>
<text x="34.4" y="202.0" font-size="12.5" font-weight="normal" fill="#000" textLength="8.6" lengthAdjust="spacingAndGlyphs">X</text>
<text x="20.699999999999996" y="246.0" font-size="12.5" font-weight="normal" fill="#000" textLength="11.6" lengthAdjust="spacingAndGlyphs">24</text>
<text x="34.4" y="246.0" font-size="12.5" font-weight="normal" fill="#000" textLength="8.6" lengthAdjust="spacingAndGlyphs">X</text>
<text x="20.699999999999996" y="290.0" font-size="12.5" font-weight="normal" fill="#000" textLength="11.6" lengthAdjust="spacingAndGlyphs">16</text>
<text x="34.4" y="290.0" font-size="12.5" font-weight="normal" fill="#000" textLength="8.6" lengthAdjust="spacingAndGlyphs">X</text>
<text x="26.499999999999996" y="334.0" font-size="12.5" font-weight="normal" fill="#000" textLength="5.8" lengthAdjust="spacingAndGlyphs">8</text>
<text x="34.4" y="334.0" font-size="12.5" font-weight="normal" fill="#000" textLength="8.6" lengthAdjust="spacingAndGlyphs">X</text>
<text x="445.3" y="137" font-size="12.5" font-weight="normal" fill="#000" textLength="12.0" lengthAdjust="spacingAndGlyphs">20</text>
<text x="445.3" y="185" font-size="12.5" font-weight="normal" fill="#000" textLength="12.0" lengthAdjust="spacingAndGlyphs">16</text>
<text x="445.3" y="233" font-size="12.5" font-weight="normal" fill="#000" textLength="12.0" lengthAdjust="spacingAndGlyphs">12</text>
<text x="445.3" y="281" font-size="12.5" font-weight="normal" fill="#000" textLength="6.0" lengthAdjust="spacingAndGlyphs">8</text>
<text x="445.3" y="329" font-size="12.5" font-weight="normal" fill="#000" textLength="6.0" lengthAdjust="spacingAndGlyphs">4</text>
<text x="46.4" y="391" font-size="12.5" font-weight="normal" fill="#000" textLength="5.8" lengthAdjust="spacingAndGlyphs">0</text>
<text x="92.5" y="391" font-size="12.5" font-weight="normal" fill="#000" textLength="11.6" lengthAdjust="spacingAndGlyphs">10</text>
<text x="141.5" y="391" font-size="12.5" font-weight="normal" fill="#000" textLength="11.6" lengthAdjust="spacingAndGlyphs">20</text>
<text x="190.5" y="391" font-size="12.5" font-weight="normal" fill="#000" textLength="11.6" lengthAdjust="spacingAndGlyphs">30</text>
<text x="239.5" y="391" font-size="12.5" font-weight="normal" fill="#000" textLength="11.6" lengthAdjust="spacingAndGlyphs">40</text>
<text x="288.5" y="391" font-size="12.5" font-weight="normal" fill="#000" textLength="11.6" lengthAdjust="spacingAndGlyphs">50</text>
<text x="337.5" y="391" font-size="12.5" font-weight="normal" fill="#000" textLength="11.6" lengthAdjust="spacingAndGlyphs">60</text>
<text x="386.5" y="391" font-size="12.5" font-weight="normal" fill="#000" textLength="11.6" lengthAdjust="spacingAndGlyphs">70</text>
<text x="435.5" y="391" font-size="12.5" font-weight="normal" fill="#000" textLength="11.6" lengthAdjust="spacingAndGlyphs">80</text>
<text x="30.6" y="425" font-size="12.5" font-weight="normal" fill="#000" textLength="47.7" lengthAdjust="spacingAndGlyphs">[12:00:43]</text>
<text x="89.1" y="425" font-size="12.5" font-weight="normal" fill="#000" textLength="65.4" lengthAdjust="spacingAndGlyphs">Elapsed Time:</text>
<text x="161.9" y="425" font-size="12.5" font-weight="normal" fill="#000" textLength="20.0" lengthAdjust="spacingAndGlyphs">1:04</text>
<text x="30.6" y="439" font-size="12.5" font-weight="normal" fill="#000" textLength="47.7" lengthAdjust="spacingAndGlyphs">[12:00:43]</text>
<text x="89.1" y="439" font-size="12.5" font-weight="normal" fill="#000" textLength="102.4" lengthAdjust="spacingAndGlyphs">Starting burst rate test</text>
<text x="30.6" y="453" font-size="12.5" font-weight="normal" fill="#000" textLength="47.7" lengthAdjust="spacingAndGlyphs">[12:00:45]</text>
<text x="89.1" y="453" font-size="12.5" font-weight="normal" fill="#000" textLength="89.1" lengthAdjust="spacingAndGlyphs">Interface burst rate:</text>
<text x="183.9" y="453" font-size="12.5" font-weight="normal" fill="#000" textLength="11.6" lengthAdjust="spacingAndGlyphs">29</text>
<text x="198.6" y="453" font-size="12.5" font-weight="normal" fill="#000" textLength="36.7" lengthAdjust="spacingAndGlyphs">MB/sec</text>
<text x="239.8" y="453" font-size="12.5" font-weight="normal" fill="#000" textLength="31.1" lengthAdjust="spacingAndGlyphs">(29321</text>
<text x="275.7" y="453" font-size="12.5" font-weight="normal" fill="#000" textLength="38.7" lengthAdjust="spacingAndGlyphs">KB/sec)</text>
<text x="30.6" y="467" font-size="12.5" font-weight="normal" fill="#000" textLength="47.7" lengthAdjust="spacingAndGlyphs">[12:00:45]</text>
<text x="89.1" y="467" font-size="12.5" font-weight="normal" fill="#000" textLength="65.4" lengthAdjust="spacingAndGlyphs">Elapsed Time:</text>
<text x="161.9" y="467" font-size="12.5" font-weight="normal" fill="#000" textLength="20.0" lengthAdjust="spacingAndGlyphs">0:02</text>
<text x="476.6" y="88" font-size="12.5" font-weight="normal" fill="#000" textLength="30.6" lengthAdjust="spacingAndGlyphs">Speed</text>
<text x="484.9" y="103" font-size="12.5" font-weight="normal" fill="#000" textLength="40.2" lengthAdjust="spacingAndGlyphs">Average</text>
<text x="487" y="117" font-size="12.5" font-weight="bold" fill="#00ffff" textLength="37.4" lengthAdjust="spacingAndGlyphs">25.12x</text>
<text x="493.6" y="142" font-size="12.5" font-weight="normal" fill="#000" textLength="23.5" lengthAdjust="spacingAndGlyphs">Start:</text>
<text x="487" y="156" font-size="12.5" font-weight="bold" fill="#00ffff" textLength="37.4" lengthAdjust="spacingAndGlyphs">14.52x</text>
<text x="494.5" y="180" font-size="12.5" font-weight="normal" fill="#000" textLength="21.2" lengthAdjust="spacingAndGlyphs">End:</text>
<text x="487" y="194" font-size="12.5" font-weight="bold" fill="#00ffff" textLength="37.4" lengthAdjust="spacingAndGlyphs">33.27x</text>
<text x="493.2" y="217" font-size="12.5" font-weight="normal" fill="#000" textLength="24.3" lengthAdjust="spacingAndGlyphs">Type:</text>
<text x="494" y="234" font-size="12.5" font-weight="bold" fill="#00ffff" textLength="22.6" lengthAdjust="spacingAndGlyphs">CAV</text>
<text x="557.3" y="88" font-size="12.5" font-weight="normal" fill="#000" textLength="62.2" lengthAdjust="spacingAndGlyphs">Access times</text>
<text x="564.8" y="103" font-size="12.5" font-weight="normal" fill="#000" textLength="41.5" lengthAdjust="spacingAndGlyphs">Random:</text>
<text x="567.3" y="117" font-size="12.5" font-weight="bold" fill="#00ffff" textLength="39.0" lengthAdjust="spacingAndGlyphs">144 ms</text>
<text x="577" y="142" font-size="12.5" font-weight="normal" fill="#000" textLength="18.6" lengthAdjust="spacingAndGlyphs">1/3:</text>
<text x="567.3" y="156" font-size="12.5" font-weight="bold" fill="#00ffff" textLength="39.0" lengthAdjust="spacingAndGlyphs">172 ms</text>
<text x="577.5" y="178" font-size="12.5" font-weight="normal" fill="#000" textLength="18.1" lengthAdjust="spacingAndGlyphs">Full:</text>
<text x="567.3" y="192" font-size="12.5" font-weight="bold" fill="#00ffff" textLength="39.0" lengthAdjust="spacingAndGlyphs">320 ms</text>
<text x="557.3" y="231" font-size="12.5" font-weight="normal" fill="#000" textLength="54.1" lengthAdjust="spacingAndGlyphs">CPU usage</text>
<text x="579" y="245.5" font-size="12.5" font-weight="normal" fill="#000" textLength="15.4" lengthAdjust="spacingAndGlyphs">1 x:</text>
<text x="579" y="285" font-size="12.5" font-weight="normal" fill="#000" textLength="15.4" lengthAdjust="spacingAndGlyphs">2 x:</text>
<text x="579" y="325.5" font-size="12.5" font-weight="normal" fill="#000" textLength="15.4" lengthAdjust="spacingAndGlyphs">4 x:</text>
<text x="579" y="362.5" font-size="12.5" font-weight="normal" fill="#000" textLength="15.4" lengthAdjust="spacingAndGlyphs">8 x:</text>
<text x="476.6" y="275" font-size="12.5" font-weight="normal" fill="#000" textLength="54.7" lengthAdjust="spacingAndGlyphs">DAE quality</text>
<text x="484.5" y="322.5" font-size="12.5" font-weight="normal" fill="#000" textLength="43.8" lengthAdjust="spacingAndGlyphs">Accurate</text>
<text x="491" y="335.5" font-size="12.5" font-weight="normal" fill="#000" textLength="31.3" lengthAdjust="spacingAndGlyphs">stream</text>
<text x="476.6" y="385" font-size="12.5" font-weight="normal" fill="#000" textLength="20.2" lengthAdjust="spacingAndGlyphs">Disc</text>
<text x="493.6" y="397" font-size="12.5" font-weight="normal" fill="#000" textLength="23.9" lengthAdjust="spacingAndGlyphs">Type:</text>
<text x="481.6" y="413" font-size="12.5" font-weight="bold" fill="#00ffff" textLength="46.6" lengthAdjust="spacingAndGlyphs">Data CD</text>
<text x="487.4" y="436" font-size="12.5" font-weight="normal" fill="#000" textLength="35.0" lengthAdjust="spacingAndGlyphs">Length:</text>
<text x="481" y="454" font-size="12.5" font-weight="bold" fill="#00ffff" textLength="49.3" lengthAdjust="spacingAndGlyphs">79:57.73</text>
<text x="557.4" y="416" font-size="12.5" font-weight="normal" fill="#000" textLength="41.8" lengthAdjust="spacingAndGlyphs">Interface</text>
<text x="562.7" y="436" font-size="12.5" font-weight="normal" fill="#000" textLength="46.5" lengthAdjust="spacingAndGlyphs">Burst rate:</text>
<text x="563" y="454" font-size="12.5" font-weight="bold" fill="#00ffff" textLength="47.4" lengthAdjust="spacingAndGlyphs">29 MB/s</text></g>
</svg>
</body></html>
